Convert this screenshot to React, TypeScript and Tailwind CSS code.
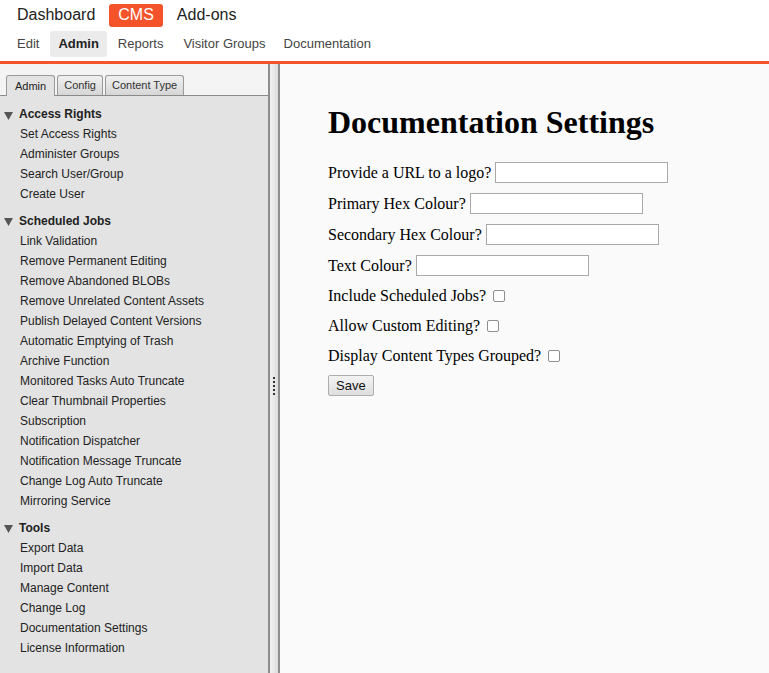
import * as React from "react";

const sections = [
  {
    title: "Access Rights",
    items: ["Set Access Rights", "Administer Groups", "Search User/Group", "Create User"],
  },
  {
    title: "Scheduled Jobs",
    items: [
      "Link Validation",
      "Remove Permanent Editing",
      "Remove Abandoned BLOBs",
      "Remove Unrelated Content Assets",
      "Publish Delayed Content Versions",
      "Automatic Emptying of Trash",
      "Archive Function",
      "Monitored Tasks Auto Truncate",
      "Clear Thumbnail Properties",
      "Subscription",
      "Notification Dispatcher",
      "Notification Message Truncate",
      "Change Log Auto Truncate",
      "Mirroring Service",
    ],
  },
  {
    title: "Tools",
    items: [
      "Export Data",
      "Import Data",
      "Manage Content",
      "Change Log",
      "Documentation Settings",
      "License Information",
    ],
  },
];

const textFields = [
  { label: "Provide a URL to a logo?" },
  { label: "Primary Hex Colour?" },
  { label: "Secondary Hex Colour?" },
  { label: "Text Colour?" },
];

const checkFields = ["Include Scheduled Jobs?", "Allow Custom Editing?", "Display Content Types Grouped?"];

const Triangle = () => (
  <svg width="9" height="8" viewBox="0 0 9 8" className="mr-[6px] mt-[3px]">
    <path d="M0 0 L9 0 L4.5 8 Z" fill="#555" />
  </svg>
);

const App = () => {
  return (
    <div className="h-[673px] w-[769px] overflow-hidden flex flex-col bg-white font-['Liberation_Sans',Arial,sans-serif]">
      {/* Header */}
      <div className="h-[61px] bg-white flex flex-col">
        <div className="flex items-center h-[29px] pt-[1px] pl-[17px] text-[16px] text-[#222]">
          <span>Dashboard</span>
          <span className="ml-[14px] px-[9px] h-[23px] flex items-center bg-[#f4532c] text-white rounded-[3px]">
            CMS
          </span>
          <span className="ml-[14px]">Add-ons</span>
        </div>
        <div className="flex items-center h-[30px] text-[13px] text-[#444] pl-[10px]">
          <span className="px-[7px] py-[3px]">Edit</span>
          <span className="ml-[4px] px-[8px] py-[3px] bg-[#ebebeb] rounded-[3px] font-bold text-[#222]">
            Admin
          </span>
          <span className="ml-[3px] px-[8px] py-[3px]">Reports</span>
          <span className="ml-[4px] px-[8px] py-[3px]">Visitor Groups</span>
          <span className="ml-[2px] px-[8px] py-[3px]">Documentation</span>
        </div>
      </div>
      <div className="h-[3px] bg-[#f4532c]" />

      {/* Body */}
      <div className="flex flex-1 min-h-0">
        {/* Left pane */}
        <div className="w-[268px] flex flex-col bg-[#e3e3e3]">
          <div className="bg-[#f4f4f4] pt-[10px] pl-[6px] flex items-end gap-[2px] border-b border-[#8a8a8a] h-[32px]">
            <div className="h-[21px] -mb-px px-[8px] flex items-center text-[11px] text-[#222] border border-b-0 border-[#999] rounded-t-[3px] bg-[#e3e3e3]">
              Admin
            </div>
            <div className="h-[20px] px-[6px] flex items-center text-[11px] text-[#333] border border-b-0 border-[#999] rounded-t-[3px] bg-gradient-to-b from-[#f0f0f0] to-[#d6d6d6]">
              Config
            </div>
            <div className="h-[20px] px-[6px] flex items-center text-[11px] text-[#333] border border-b-0 border-[#999] rounded-t-[3px] bg-gradient-to-b from-[#f0f0f0] to-[#d6d6d6]">
              Content Type
            </div>
          </div>
          <div className="pt-[8px] text-[12px] text-[#222]">
            {sections.map((s, i) => (
              <div key={s.title} className={i > 0 ? "mt-[6px]" : ""}>
                <div className={`${i > 0 ? "h-[21px]" : "h-[20px]"} flex items-center pl-[4px] font-bold`}>
                  <Triangle />
                  {s.title}
                </div>
                {s.items.map((it) => (
                  <div key={it} className="h-[20px] flex items-center pl-[20px]">
                    {it}
                  </div>
                ))}
              </div>
            ))}
          </div>
        </div>

        {/* Splitter */}
        <div className="w-[12px] border-l-2 border-r-2 border-[#8e8e8e] bg-gradient-to-r from-[#f2f2f2] to-[#dcdcdc] flex items-center justify-center">
          <div className="flex flex-col gap-[2px] mt-[34px]">
            {[0, 1, 2, 3, 4].map((d) => (
              <div key={d} className="w-[2px] h-[2px] bg-[#333]" />
            ))}
          </div>
        </div>

        {/* Content */}
        <div className="flex-1 bg-[#fafafa] pl-[48px] pt-[40px] font-['Liberation_Serif','Times_New_Roman',serif] text-[16px] text-black">
          <h1 className="text-[32px] font-bold leading-[37px]">Documentation Settings</h1>
          <div className="mt-[16px] flex flex-col">
            {textFields.map((f) => (
              <div key={f.label} className="h-[31px] flex items-center">
                <span>{f.label}</span>
                <input className="ml-[4px] w-[173px] h-[21px] bg-white border border-[#a9a9a9]" />
              </div>
            ))}
            {checkFields.map((c) => (
              <div key={c} className="h-[30px] flex items-center">
                <span>{c}</span>
                <span className="ml-[7px] w-[12px] h-[12px] border border-[#8f8f8f] rounded-[2px] bg-white" />
              </div>
            ))}
            <div className="mt-[2px]">
              <button className="h-[21px] px-[7px] text-[13px] font-['Liberation_Sans',Arial,sans-serif] text-[#111] bg-gradient-to-b from-[#f3f3f3] to-[#dedede] border border-[#adadad] rounded-[2px]">
                Save
              </button>
            </div>
          </div>
        </div>
      </div>
    </div>
  );
};

export default App;
